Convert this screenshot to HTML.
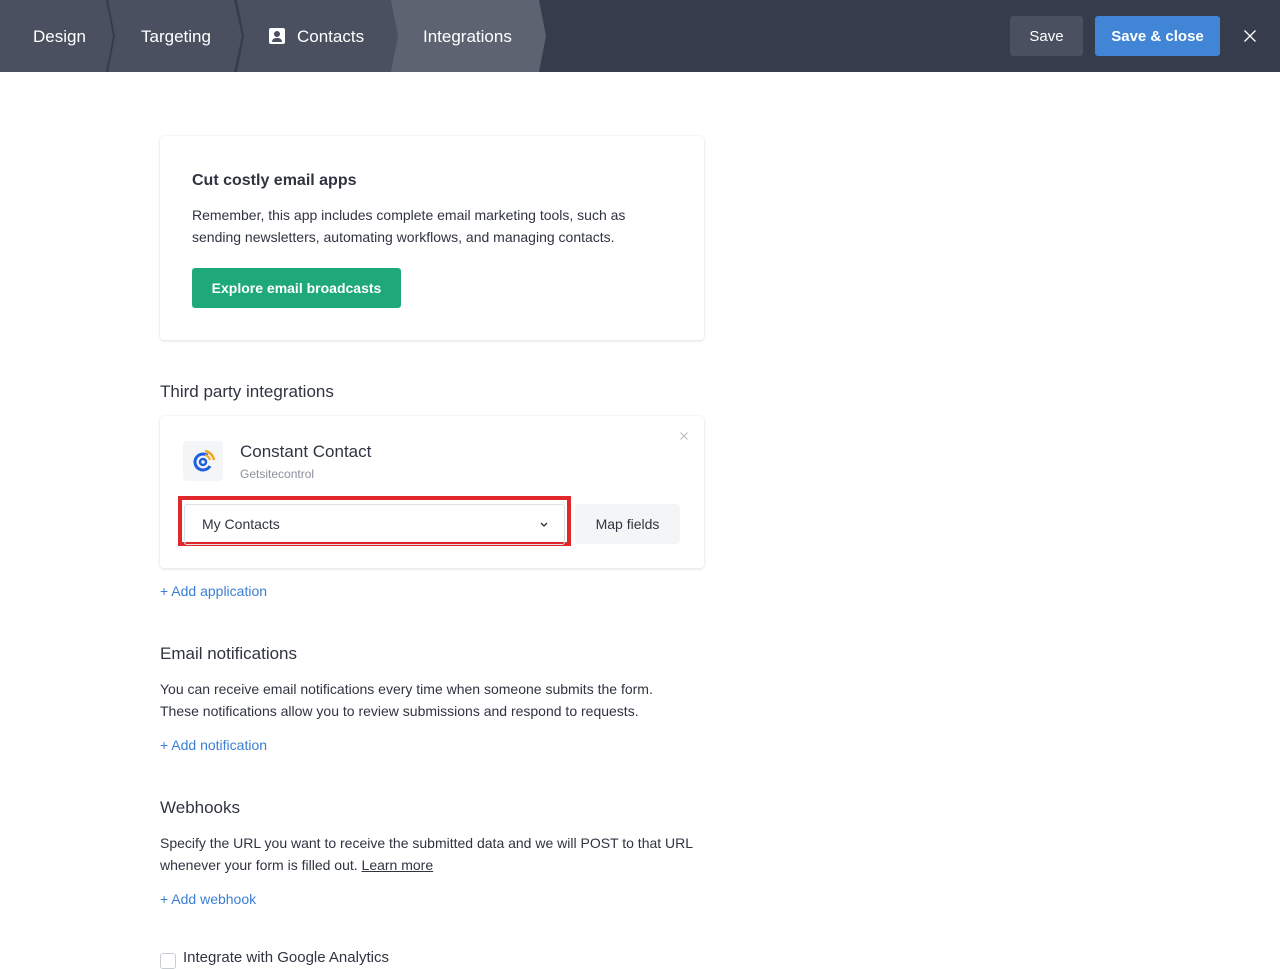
<!DOCTYPE html>
<html><head><style>
*{box-sizing:border-box;margin:0;padding:0}
body{width:1280px;height:960px;overflow:hidden;background:#fff;font-family:"Liberation Sans",sans-serif;color:#2f3441;position:relative}
.hdr{position:absolute;left:0;top:0;width:1280px;height:72px;background:#363c4c}
.tab{position:absolute;top:0;height:72px;color:#fff;font-size:17px;line-height:73px;background:#4a5060}
.t1{left:0;width:113px;clip-path:polygon(0 0,106px 0,113px 36px,106px 72px,0 72px);padding-left:33px}
.t2{left:108px;width:134px;clip-path:polygon(0 0,126px 0,134px 36px,126px 72px,0 72px,7px 36px);padding-left:33px}
.t3{left:237px;width:163px;clip-path:polygon(0 0,155px 0,163px 36px,155px 72px,0 72px,7px 36px);padding-left:32px}
.t4{left:391px;width:155px;background:#5d6371;clip-path:polygon(0 0,148px 0,155px 36px,148px 72px,0 72px,7px 36px);padding-left:32px}
.btn{position:absolute;top:16px;height:40px;border-radius:3px;color:#fff;font-size:15px;line-height:41px;text-align:center}
.card{position:absolute;left:160px;width:544px;background:#fff;border-radius:4px;box-shadow:0 1px 3px rgba(0,0,0,.12),0 0 1px rgba(0,0,0,.08)}
.h{position:absolute;left:160px;font-size:17px;color:#2f3441}
.p{position:absolute;left:160px;font-size:14px;line-height:22px;color:#2f3441}
.a{position:absolute;left:160px;font-size:14px;color:#3b7fd4}
</style></head><body>
<div class="hdr">
<div class="tab t1">Design</div>
<div class="tab t2">Targeting</div>
<div class="tab t3"><span style="display:inline-block;width:16px;height:16px;background:#fff;border-radius:2px;vertical-align:-2px;margin-right:12px;position:relative"><span style="position:absolute;left:5px;top:3px;width:6px;height:6px;border-radius:50%;background:#4a5060"></span><span style="position:absolute;left:3px;top:10px;width:10px;height:4px;border-radius:4px 4px 0 0;background:#4a5060"></span></span>Contacts</div>
<div class="tab t4">Integrations</div>
<div class="btn" style="left:1010px;width:73px;background:#4a5060">Save</div>
<div class="btn" style="left:1095px;width:125px;background:#4185d6;font-weight:bold">Save &amp; close</div>
<svg style="position:absolute;left:1244px;top:30px" width="12" height="12" viewBox="0 0 12 12"><path d="M0.5 0.5L11.5 11.5M11.5 0.5L0.5 11.5" stroke="#fff" stroke-width="1.3"/></svg>
</div>

<div class="card" style="top:136px;height:204px">
<div style="position:absolute;left:32px;top:36px;font-size:16px;font-weight:bold;color:#2f3441">Cut costly email apps</div>
<div style="position:absolute;left:32px;top:68px;font-size:14px;line-height:22px">Remember, this app includes complete email marketing tools, such as<br>sending newsletters, automating workflows, and managing contacts.</div>
<div style="position:absolute;left:32px;top:132px;width:209px;height:40px;background:#1fa97a;border-radius:3px;color:#fff;font-size:14px;font-weight:bold;line-height:40px;text-align:center">Explore email broadcasts</div>
</div>

<div class="h" style="top:382px">Third party integrations</div>
<div class="card" style="top:416px;height:152px">
<svg style="position:absolute;left:520px;top:16px" width="8" height="8" viewBox="0 0 8 8"><path d="M0.5 0.5L7.5 7.5M7.5 0.5L0.5 7.5" stroke="#b5b9c2" stroke-width="1"/></svg>
<div style="position:absolute;left:23px;top:25px;width:40px;height:40px;background:#f4f5f7;border-radius:4px">
<svg width="40" height="40" viewBox="0 0 40 40"><circle cx="20" cy="21" r="8" fill="none" stroke="#1f5fe0" stroke-width="3" stroke-dasharray="38 12" transform="rotate(30 20 21)"/><circle cx="20" cy="21" r="3" fill="none" stroke="#1f5fe0" stroke-width="2.5"/><path d="M22 10a11 11 0 0 1 9 9" fill="none" stroke="#f5a623" stroke-width="2.5"/><path d="M22 14a7 7 0 0 1 5 5" fill="none" stroke="#f5a623" stroke-width="2"/></svg></div>
<div style="position:absolute;left:80px;top:26px;font-size:17px">Constant Contact</div>
<div style="position:absolute;left:80px;top:51px;font-size:12px;color:#8a8f9c">Getsitecontrol</div>
<div style="position:absolute;left:18px;top:80px;width:393px;height:50px;border:4px solid #e0282b"></div>
<div style="position:absolute;left:24px;top:88px;width:381px;height:41px;border:1px solid #dde1e6;border-radius:3px;font-size:14px;line-height:39px;padding-left:17px">My Contacts<svg style="position:absolute;right:16px;top:17px" width="8" height="5" viewBox="0 0 8 5"><path d="M1 1L4 4L7 1" fill="none" stroke="#2f3441" stroke-width="1.3"/></svg></div>
<div style="position:absolute;left:415px;top:88px;width:105px;height:40px;background:#f4f5f7;border-radius:4px;font-size:14px;line-height:40px;text-align:center">Map fields</div>
</div>
<div class="a" style="top:583px">+ Add application</div>

<div class="h" style="top:644px">Email notifications</div>
<div class="p" style="top:678px">You can receive email notifications every time when someone submits the form.<br>These notifications allow you to review submissions and respond to requests.</div>
<div class="a" style="top:737px">+ Add notification</div>

<div class="h" style="top:798px">Webhooks</div>
<div class="p" style="top:832px">Specify the URL you want to receive the submitted data and we will POST to that URL<br>whenever your form is filled out. <u>Learn more</u></div>
<div class="a" style="top:891px">+ Add webhook</div>

<div style="position:absolute;left:160px;top:953px;width:16px;height:16px;border:1px solid #c8ccd3;border-radius:3px"></div>
<div style="position:absolute;left:183px;top:949px;font-size:15px">Integrate with Google Analytics</div>
</body></html>
